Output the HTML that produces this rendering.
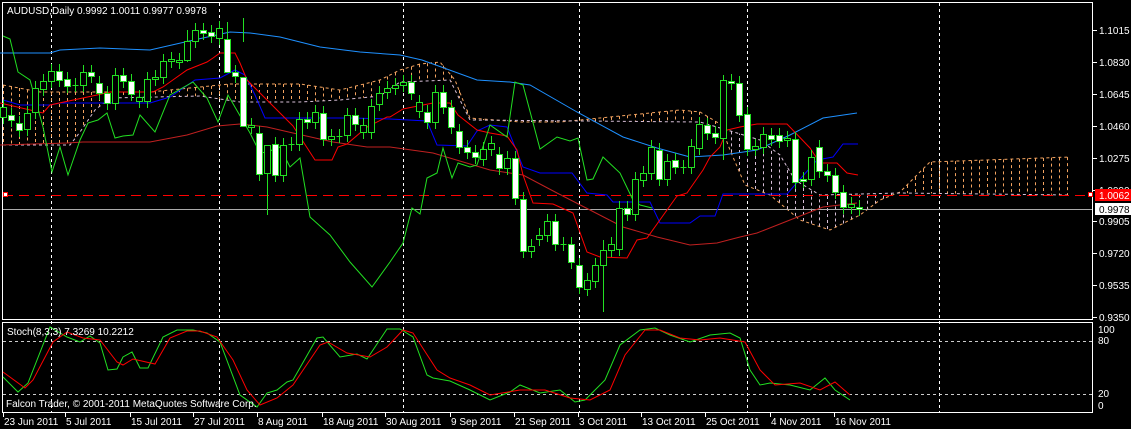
<!DOCTYPE html>
<html><head><meta charset="utf-8"><style>
html,body{margin:0;padding:0;background:#000;width:1131px;height:429px;overflow:hidden}
svg{display:block}
text{font-family:"Liberation Sans",sans-serif;font-size:10px;fill:#fff}
</style></head><body>
<svg id="s" width="1131" height="429" xmlns="http://www.w3.org/2000/svg">
<rect x="2.5" y="2.5" width="1090" height="317" fill="none" stroke="#fff"/>
<rect x="2.5" y="322.5" width="1090" height="90" fill="none" stroke="#fff"/>
<g id="g"></g>
<text x="7" y="14">AUDUSD,Daily  0.9992 1.0011 0.9977 0.9978</text>
<text x="7" y="335">Stoch(8,3,3) 7.3269 10.2212</text>
<text x="6" y="407">Falcon Trader, © 2001-2011 MetaQuotes Software Corp.</text>
<g id="lab"></g>
</svg>
<script>
var g=document.getElementById('g'),h='';
function pl(pts,c,extra){h+='<polyline fill="none" stroke="'+c+'" stroke-width="1" '+(extra||'')+' points="'+pts.map(p=>p.join(',')).join(' ')+'"/>';}
function interp(pts,x){for(var i=0;i<pts.length-1;i++){if(x>=pts[i][0]&&x<=pts[i+1][0]){var t=(x-pts[i][0])/(pts[i+1][0]-pts[i][0]);return pts[i][1]+t*(pts[i+1][1]-pts[i][1]);}}return null;}
[51,219,403,579,747,939].forEach(x=>{h+='<line x1="'+(x+.5)+'" y1="3" x2="'+(x+.5)+'" y2="412" stroke="#fff" stroke-dasharray="3,3"/>';});
h+='<line x1="3" y1="341.5" x2="1092" y2="341.5" stroke="#ccc" stroke-dasharray="3,3"/>';
h+='<line x1="3" y1="394.5" x2="1092" y2="394.5" stroke="#ccc" stroke-dasharray="3,3"/>';
var A=[[3,85],[40,92],[70,92],[100,92],[150,92],[190,88],[230,84],[300,84],[340,90],[380,80],[400,70],[420,64],[440,62],[455,80],[470,118],[520,122],[560,122],[600,118],[640,114],[680,110],[700,112],[720,124],[730,150],[745,185],[770,195],[800,220],[830,230],[860,215],[880,200],[900,192],[930,162],[1070,157]];
var B=[[3,145],[70,145],[80,132],[95,110],[110,98],[200,96],[240,102],[300,102],[340,100],[380,96],[400,82],[450,80],[470,120],[700,122],[727,130],[760,140],[780,155],[795,180],[820,195],[900,193],[1070,195]];
for(var x=3;x<=1067;x+=8){var a=interp(A,x),b=interp(B,x);if(a==null||b==null)continue;h+='<line x1="'+(x+.5)+'" y1="'+a+'" x2="'+(x+.5)+'" y2="'+b+'" stroke="'+(a<b?'#f4a460':'#d8bfd8')+'" stroke-dasharray="3,3"/>';}
pl(A,'#f4a460','stroke-dasharray="3,3"');pl(B,'#d8bfd8','stroke-dasharray="3,3"');
h+='<line x1="3" y1="195.5" x2="1087" y2="195.5" stroke="#f00" stroke-dasharray="10,6"/>';
h+='<rect x="3.5" y="192.5" width="4" height="4" fill="#fff" stroke="#f00"/>';
h+='<rect x="1088.5" y="192.5" width="4" height="4" fill="#fff" stroke="#f00"/>';
h+='<line x1="3" y1="209.5" x2="1092" y2="209.5" stroke="#aaa"/>';
pl([[0,53],[50,53],[60,50],[100,48],[150,50],[185,42],[230,32],[250,33],[280,37],[300,42],[320,47],[360,52],[400,55],[422,60],[477,80],[510,82],[530,85],[577,112],[623,137],[657,148],[690,157],[723,155],[757,150],[790,135],[823,118],[857,113]],'#1e90ff');
pl([[0,145],[67,143],[83,142],[150,142],[187,135],[217,126],[240,124],[267,127],[293,133],[333,142],[367,147],[390,147],[433,153],[490,170],[523,175],[557,193],[590,210],[623,227],[657,237],[690,245],[717,243],[740,237],[757,233],[790,220],[823,207],[857,203]],'#c02020');
pl([[3,100],[20,105],[50,105],[60,103],[100,103],[150,103],[170,97],[195,80],[220,78],[235,70],[245,75],[255,95],[265,118],[300,118],[350,118],[390,119],[427,121],[437,145],[467,146],[477,131],[490,125],[507,127],[523,167],[540,173],[572,173],[587,193],[607,195],[613,202],[650,202],[660,223],[690,223],[700,216],[715,216],[723,194],[787,194],[817,160],[833,157],[843,144],[858,144]],'#0000ff');
pl([[0,103],[43,113],[50,105],[97,95],[110,92],[153,92],[163,87],[187,70],[207,62],[213,58],[220,53],[235,53],[240,63],[247,80],[287,120],[293,126],[315,160],[332,160],[338,147],[347,144],[367,127],[387,117],[390,117],[403,109],[433,103],[450,103],[458,115],[477,130],[490,133],[507,136],[517,150],[523,175],[533,203],[553,204],[573,213],[587,252],[600,257],[627,258],[637,240],[647,238],[667,210],[677,196],[687,193],[703,170],[710,157],[720,147],[727,130],[740,127],[757,124],[787,124],[810,148],[820,163],[837,163],[847,173],[858,175]],'#f00');
pl([[3,36],[10,39],[18,72],[30,80],[43,127],[52,172],[60,147],[68,175],[80,140],[88,123],[98,120],[107,113],[115,138],[123,136],[133,135],[140,115],[155,132],[170,95],[193,82],[207,98],[218,122],[228,95],[250,133],[260,153],[267,152],[280,147],[290,167],[300,158],[310,217],[330,235],[350,262],[372,287],[390,262],[403,243],[412,208],[420,214],[427,178],[437,173],[443,148],[452,178],[458,163],[470,167],[477,165],[490,125],[507,137],[515,82],[523,85],[540,149],[557,137],[570,141],[578,138],[587,180],[593,179],[603,157],[620,173],[633,200],[640,205],[652,208]],'#22e022');
var C=[[107,117],[115,120,1],[123,130,1],[129,113],[112,88],[89,81],[81,71],[71,80,1],[79,86,1],[85,85],[85,72],[72,76,1],[83,93,1],[93,103,1],[103,75],[75,81,1],[81,94,1],[101,97],[101,79],[79,77],[77,61],[61,59],[62,60],[60,41],[41,30],[30,33,1],[32,36,1],[38,28],[39,72,1],[72,76,1],[77,126,1],[125,127],[133,174,1],[173,145],[144,175,1],[175,145],[144,144],[144,119],[119,122,1],[122,112],[113,139,1],[139,136],[136,136],[135,115],[115,124,1],[132,125],[132,106],[104,93],[92,88],[88,85],[85,82],[82,93,1],[111,102],[112,122,1],[122,92],[92,107,1],[107,127,1],[131,147,1],[147,152,1],[152,157,1],[159,149],[149,143],[154,168,1],[168,158],[158,198,1],[199,251,1],[251,246],[239,235],[235,221],[221,244,1],[244,244],[244,262,1],[265,287,1],[289,280],[281,265],[265,250],[250,244],[249,208],[208,214,1],[214,179],[180,173],[173,147],[150,179,1],[179,161],[160,167,1],[167,167],[167,146],[148,124],[125,133,1],[133,137,1],[138,80],[81,83,1],[83,115,1],[114,149,1],[149,146],[147,134],[135,139,1],[135,141,1],[140,138],[139,182,1],[179,181,1],[179,157],[147,171,1],[171,175,1],[175,192,1],[192,207,1],[207,204],[207,209,1]];
var wk={33:[145,215],30:[18,42],75:[240,312],28:[22,40],90:[75,160],23:[30,62]};
C.forEach((c,i)=>{var x=3+8*i+.5,t=Math.min(c[0],c[1]),b=Math.max(c[0],c[1]);var w=wk[i]||[t-7,b+7];
h+='<line x1="'+x+'" y1="'+w[0]+'" x2="'+x+'" y2="'+w[1]+'" stroke="#22e022"/>';
if(b-t<1)h+='<line x1="'+(x-3)+'" y1="'+(t+.5)+'" x2="'+(x+3)+'" y2="'+(t+.5)+'" stroke="#22e022"/>';
else h+='<rect x="'+(x-3)+'" y="'+(t+.5)+'" width="6" height="'+(b-t)+'" fill="'+(c[2]?'#fff':'#000')+'" stroke="#22e022"/>';});
pl([[3,377],[18,392],[28,383],[50,327],[67,337],[80,342],[90,336],[100,343],[108,370],[117,369],[123,357],[132,352],[140,368],[148,368],[163,337],[177,330],[193,330],[207,333],[220,342],[240,395],[257,407],[267,393],[277,390],[287,382],[293,380],[317,338],[323,337],[340,357],[357,354],[367,359],[387,329],[400,329],[413,337],[427,375],[433,378],[450,381],[470,390],[490,400],[510,392],[520,385],[540,393],[560,390],[575,402],[585,400],[605,380],[620,345],[640,330],[655,328],[670,335],[690,342],[710,335],[730,333],[740,338],[750,370],[760,385],[770,383],[790,385],[810,390],[825,378],[835,390],[850,400]],'#22e022');
pl([[3,372],[25,388],[33,380],[53,342],[67,332],[83,338],[100,340],[117,362],[123,365],[133,359],[155,364],[170,338],[187,331],[200,331],[217,337],[233,360],[247,390],[260,405],[277,398],[293,385],[320,345],[328,342],[347,353],[370,357],[387,347],[403,330],[413,333],[437,370],[450,378],[470,385],[490,395],[520,390],[545,390],[570,398],[590,400],[610,390],[625,355],[645,330],[660,330],[680,338],[700,340],[720,338],[745,342],[760,370],[775,385],[800,383],[820,390],[835,382],[850,395]],'#f00');
g.innerHTML=h;
var L='';
[['1.1015',30],['1.0830',62],['1.0645',94],['1.0460',126],['1.0275',158],['1.0090',190],['0.9905',221],['0.9720',253],['0.9535',285],['0.9350',317]].forEach(p=>{L+='<line x1="1093" y1="'+(p[1]+.5)+'" x2="1097" y2="'+(p[1]+.5)+'" stroke="#fff"/><text x="1099" y="'+(p[1]+4)+'">'+p[0]+'</text>';});
L+='<rect x="1095" y="189" width="36" height="12" fill="#f00"/><text x="1099" y="199">1.0062</text>';
L+='<rect x="1095" y="203" width="36" height="12" fill="#fff"/><text x="1099" y="213" style="fill:#000">0.9978</text>';
[['100',333],['80',344],['20',397],['0',409]].forEach(p=>{L+='<text x="1098" y="'+p[1]+'">'+p[0]+'</text>';});
[['23 Jun 2011',3],['5 Jul 2011',65],['15 Jul 2011',130],['27 Jul 2011',193],['8 Aug 2011',257],['18 Aug 2011',322],['30 Aug 2011',385],['9 Sep 2011',450],['21 Sep 2011',514],['3 Oct 2011',578],['13 Oct 2011',641],['25 Oct 2011',705],['4 Nov 2011',770],['16 Nov 2011',834]].forEach(p=>{L+='<line x1="'+(p[1]+.5)+'" y1="413" x2="'+(p[1]+.5)+'" y2="417" stroke="#fff"/><text x="'+(p[1]+1)+'" y="425">'+p[0]+'</text>';});
document.getElementById('lab').innerHTML=L;
</script>
</body></html>
